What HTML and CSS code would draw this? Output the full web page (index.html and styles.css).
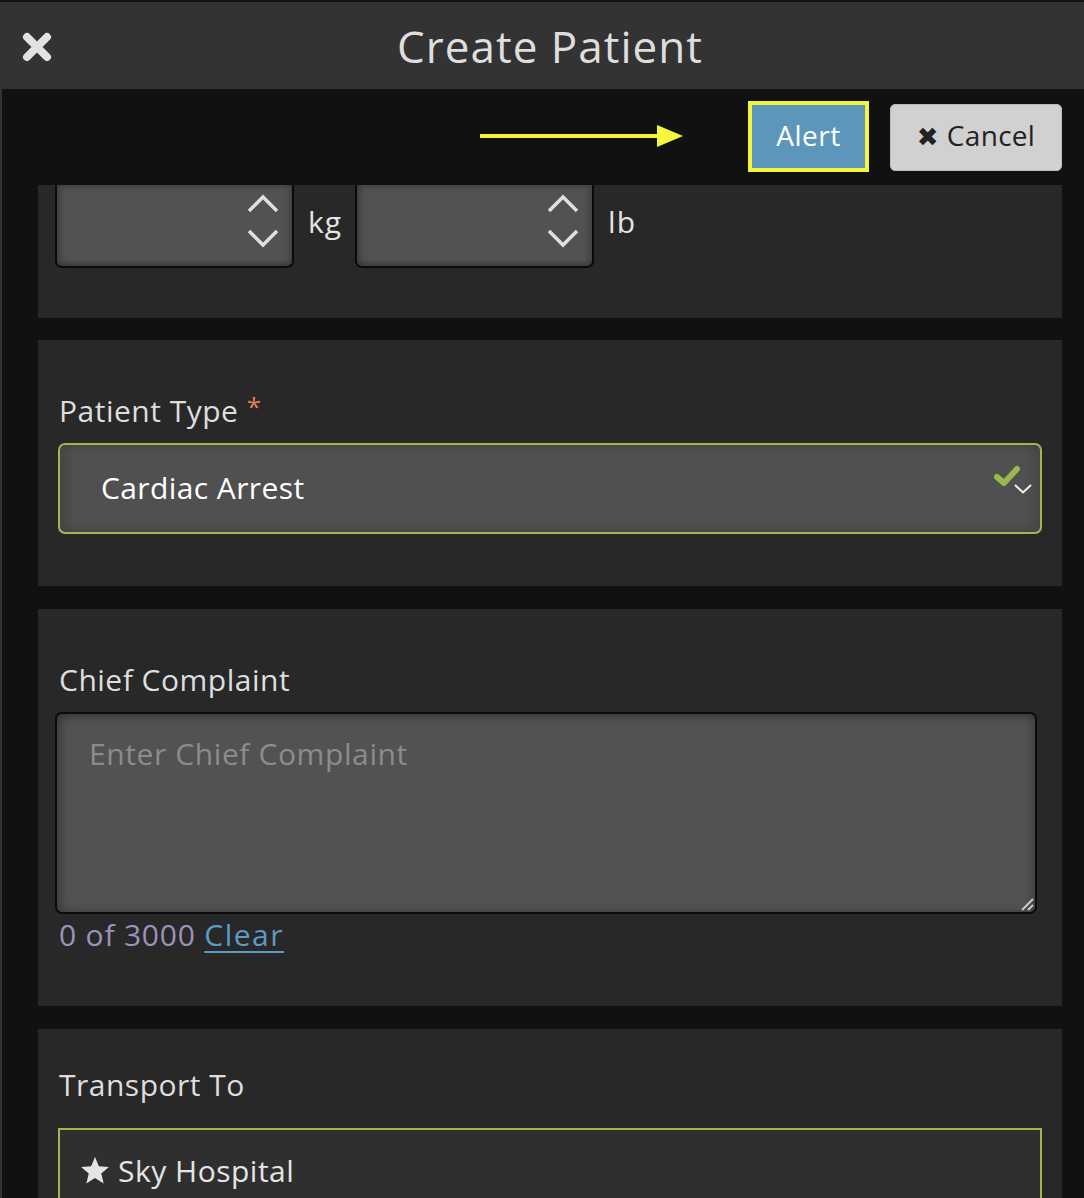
FILE: index.html
```html
<!DOCTYPE html>
<html>
<head>
<meta charset="utf-8">
<link rel="stylesheet" href="styles.css">
</head>
<body>
<header class="header">
  <button class="close-btn" aria-label="Close">
    <svg width="30" height="30" viewBox="0 0 30 30"><path d="M5 5 L25 25 M25 5 L5 25" stroke="#e2e2e2" stroke-width="8" stroke-linecap="round"/></svg>
  </button>
  <h1 class="title">Create Patient</h1>
</header>
<main class="main">
  <div class="toolbar">
    <svg class="arrow" width="204" height="24" viewBox="0 0 204 24"><rect x="0" y="10" width="180" height="4" fill="#f6f63c"/><polygon points="177,1 203,12 177,23" fill="#f6f63c"/></svg>
    <button class="btn-alert">Alert</button>
    <button class="btn-cancel"><span class="cx">✖</span> Cancel</button>
  </div>

  <section class="panel panel-weight">
    <div class="num-input">
      <span class="spin">
        <svg width="34" height="54" viewBox="0 0 34 54"><path d="M3 17 L17 3 L31 17 M3 37 L17 51 L31 37" fill="none" stroke="#e0e0e0" stroke-width="3.5"/></svg>
      </span>
    </div>
    <span class="unit">kg</span>
    <div class="num-input">
      <span class="spin">
        <svg width="34" height="54" viewBox="0 0 34 54"><path d="M3 17 L17 3 L31 17 M3 37 L17 51 L31 37" fill="none" stroke="#e0e0e0" stroke-width="3.5"/></svg>
      </span>
    </div>
    <span class="unit">lb</span>
  </section>

  <section class="panel panel-type">
    <label class="field-label">Patient Type <span class="req">*</span></label>
    <div class="select">
      <span class="select-text">Cardiac Arrest</span>
      <svg class="check" width="26" height="22" viewBox="0 0 26 22"><path d="M3 12 L10 18 L23 4" fill="none" stroke="#9ab84b" stroke-width="6" stroke-linecap="round" stroke-linejoin="round"/></svg>
      <svg class="caret" width="18" height="10" viewBox="0 0 18 10"><path d="M1 1 L9 8.5 L17 1" fill="none" stroke="#f2f2f2" stroke-width="2"/></svg>
    </div>
  </section>

  <section class="panel panel-complaint">
    <label class="field-label">Chief Complaint</label>
    <div class="textarea">
      <span class="placeholder">Enter Chief Complaint</span>
      <svg class="grip" width="14" height="14" viewBox="0 0 14 14"><path d="M2 13 L13 2 M8 13 L13 8" stroke="#c8c8c8" stroke-width="2"/></svg>
    </div>
    <div class="counter">0 of 3000 <a class="clear" href="#">Clear</a></div>
  </section>

  <section class="panel panel-transport">
    <label class="field-label">Transport To</label>
    <div class="dest">
      <svg class="star" width="30" height="29" viewBox="0 0 28 27"><polygon points="14,1 17.6,9.6 27,10.3 19.8,16.4 22.1,25.6 14,20.6 5.9,25.6 8.2,16.4 1,10.3 10.4,9.6" fill="#e4e4e4"/></svg>
      <span class="dest-text">Sky Hospital</span>
    </div>
  </section>
</main>
</body>
</html>
```

FILE: styles.css
```css
* { box-sizing: border-box; }
html, body { margin: 0; padding: 0; }
body {
  background: #111111;
  font-family: "Open Sans", "Liberation Sans", sans-serif;
  color: #dddddd;
  width: 1084px;
  height: 1198px;
  overflow: hidden;
}
.header {
  height: 89px;
  border-top: 2px solid #111;
  background: #333333;
  display: flex;
  align-items: center;
  position: relative;
}
.close-btn {
  background: none;
  border: 0;
  padding: 0;
  margin-left: 22px;
  margin-top: 2px;
  width: 30px;
  height: 30px;
  display: flex;
}
.title {
  margin: 0;
  flex: 1;
  text-align: center;
  font-size: 44px;
  font-weight: 400;
  color: #dedede;
  letter-spacing: 1px;
  padding-right: 36px;
  line-height: 1;
}
.main {
  border-left: 2px solid #333;
  min-height: 1109px;
}
.toolbar {
  height: 96px;
  display: flex;
  justify-content: flex-end;
  align-items: center;
  padding-right: 22px;
}
.arrow { margin-right: 64px; margin-top: -3px; }
.btn-alert {
  width: 121px;
  height: 71px;
  background: #5c97bb;
  border: 4px solid #f4f43e;
  color: #ffffff;
  font-family: inherit;
  font-size: 28px;
  letter-spacing: 0.5px;
  padding: 0 0 4px;
  margin-top: -1px;
}
.btn-cancel {
  margin-left: 21px;
  width: 172px;
  height: 67px;
  background: #d1d1d1;
  border: 1px solid #bbbbbb;
  border-radius: 5px;
  color: #222;
  font-family: inherit;
  font-size: 28px;
  letter-spacing: 0.3px;
  padding: 0 0 4px;
  display: flex;
  align-items: center;
  justify-content: center;
  gap: 8px;
}
.cx { font-size: 26px; margin-top: 3px; font-family: "DejaVu Sans", sans-serif; }

.panel {
  margin-left: 36px;
  width: 1024px;
  background: #282828;
  margin-bottom: 23px;
}
.panel-weight {
  height: 133px;
  display: flex;
  align-items: flex-start;
  padding-left: 17px;
  margin-bottom: 22px;
}
.num-input {
  width: 239px;
  height: 83px;
  background: #525252;
  border: 2px solid #0a0a0a;
  border-top: 0;
  border-radius: 0 0 7px 7px;
  box-shadow: inset 4px 0 6px rgba(0,0,0,0.18), inset -4px 0 6px rgba(0,0,0,0.12), inset 0 -3px 6px rgba(0,0,0,0.15);
  display: flex;
  justify-content: flex-end;
  padding-right: 12px;
  padding-top: 9px;
}
.spin { display: flex; }
.unit {
  font-size: 30px;
  color: #e4e4e4;
  margin: 14px 13px 0 14px;
  line-height: 46px;
  letter-spacing: 1px;
}
.field-label {
  display: block;
  font-size: 30px;
  line-height: 32px;
  color: #dedede;
  letter-spacing: 0.5px;
}
.req { color: #df7f5a; font-size: 26px; vertical-align: 6px; }
.panel-type {
  height: 246px;
  padding: 50px 20px 0 20px;
}
.panel-type .field-label { padding-left: 1px; }
.select {
  margin-top: 16px;
  height: 91px;
  border: 2px solid #9cb84e;
  border-radius: 7px;
  background: #505050;
  box-shadow: inset 8px 0 10px rgba(0,0,0,0.12), inset -8px 0 10px rgba(0,0,0,0.1);
  display: flex;
  align-items: center;
  padding-left: 41px;
  position: relative;
}
.select-text {
  font-size: 30px;
  color: #ffffff;
  letter-spacing: 0.4px;
  font-weight: 500;
  margin-top: -2px;
}
.check { position: absolute; right: 20px; top: 20px; }
.caret { position: absolute; right: 8px; top: 39px; }
.panel-complaint {
  height: 397px;
  padding: 55px 25px 0 17px;
}
.panel-complaint .field-label { padding-left: 4px; }
.textarea {
  margin-top: 16px;
  height: 202px;
  background: #525252;
  border: 2px solid #0a0a0a;
  border-radius: 7px;
  box-shadow: inset 6px 0 8px rgba(0,0,0,0.18), inset -5px 0 8px rgba(0,0,0,0.12), inset 0 5px 8px rgba(0,0,0,0.12);
  position: relative;
  padding: 20px 0 0 32px;
}
.placeholder {
  font-size: 30px;
  color: #8c8c8c;
  letter-spacing: 0.6px;
  line-height: 40px;
}
.grip { position: absolute; right: 1px; bottom: 1px; }
.counter {
  margin-top: 1px;
  padding-left: 4px;
  font-size: 30px;
  line-height: 40px;
  color: #9d92bb;
  letter-spacing: 0.8px;
}
.clear { color: #5b9bc4; text-decoration: underline; text-underline-offset: 5px; text-decoration-thickness: 2px; letter-spacing: 1.5px; }
.panel-transport {
  height: 300px;
  padding: 40px 20px 0 20px;
}
.panel-transport .field-label { padding-left: 1px; }
.dest {
  margin-top: 27px;
  height: 120px;
  border: 2px solid #9cb84e;
  border-bottom: 0;
  background: #2f2f2f;
  display: flex;
  align-items: flex-start;
  padding: 24px 0 0 20px;
  gap: 8px;
}
.star { margin-top: 2px; }
.dest-text {
  font-size: 30px;
  line-height: 34px;
  color: #e4e4e4;
  letter-spacing: 0.5px;
}
```
